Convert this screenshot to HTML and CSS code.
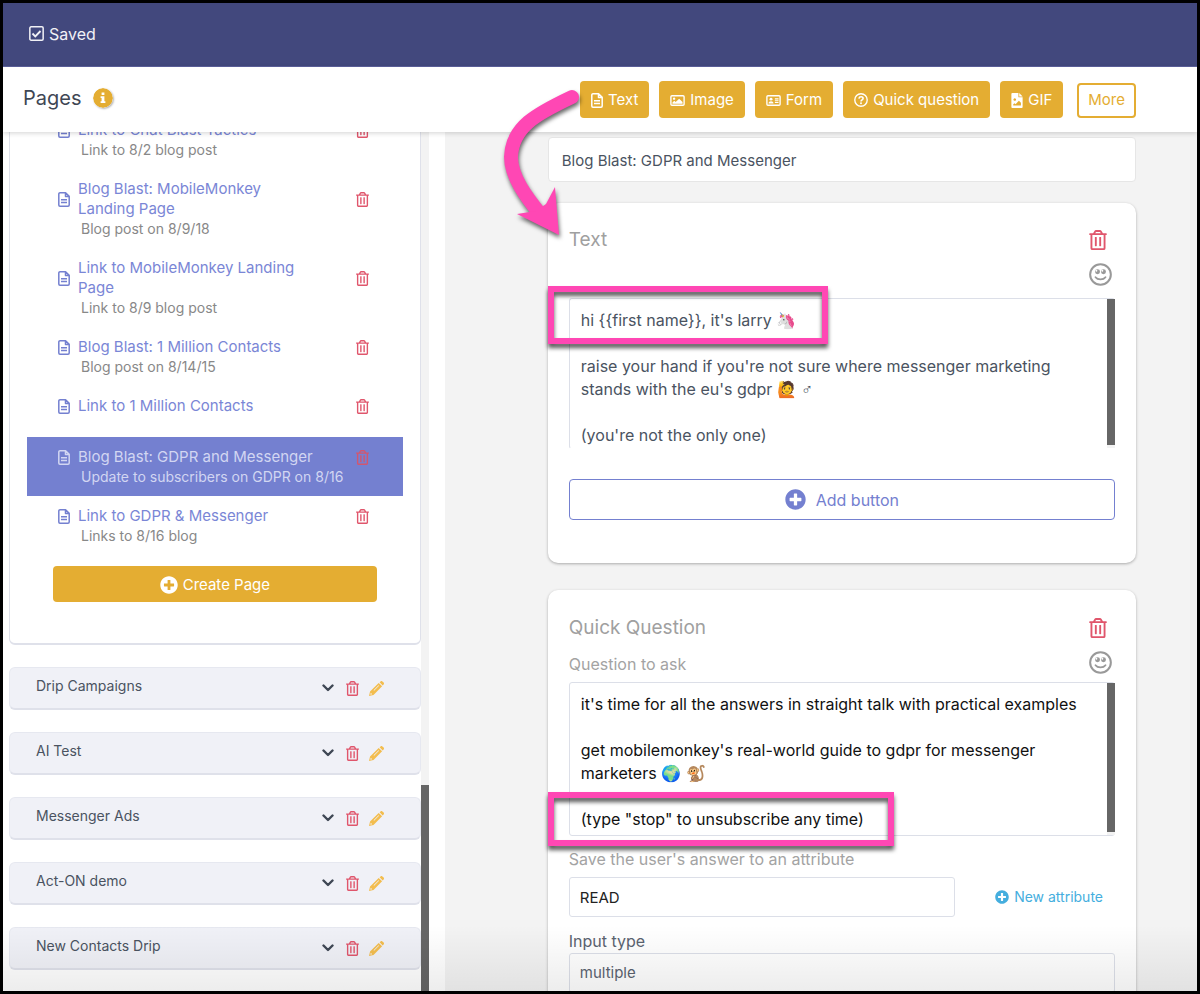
FILE: index.html
```html
<!DOCTYPE html>
<html lang="en">
<head>
<meta charset="utf-8">
<meta name="viewport" content="width=device-width, initial-scale=1">
<title>Pages</title>
<link rel="stylesheet" href="styles.css">
</head>
<body>
<svg class="sprite" aria-hidden="true">
  <symbol id="trash" viewBox="0 0 448 512"><path fill="currentColor" d="M268 416h24a12 12 0 0 0 12-12V188a12 12 0 0 0-12-12h-24a12 12 0 0 0-12 12v216a12 12 0 0 0 12 12zM432 80h-82.41l-34-56.7A48 48 0 0 0 274.41 0H173.59a48 48 0 0 0-41.16 23.3L98.41 80H16A16 16 0 0 0 0 96v16a16 16 0 0 0 16 16h16v336a48 48 0 0 0 48 48h288a48 48 0 0 0 48-48V128h16a16 16 0 0 0 16-16V96a16 16 0 0 0-16-16zM171.84 50.91A6 6 0 0 1 177 48h94a6 6 0 0 1 5.15 2.91L293.61 80H154.39zM368 464H80V128h288zm-212-48h24a12 12 0 0 0 12-12V188a12 12 0 0 0-12-12h-24a12 12 0 0 0-12 12v216a12 12 0 0 0 12 12z"/></symbol>
  <symbol id="plus" viewBox="0 0 512 512"><path fill="currentColor" d="M256 8C119 8 8 119 8 256s111 248 248 248 248-111 248-248S393 8 256 8zm144 276c0 6.600-5.400 12-12 12h-92v92c0 6.600-5.400 12-12 12h-56c-6.600 0-12-5.400-12-12v-92h-92c-6.600 0-12-5.400-12-12v-56c0-6.600 5.400-12 12-12h92v-92c0-6.600 5.400-12 12-12h56c6.600 0 12 5.400 12 12v92h92c6.600 0 12 5.400 12 12v56z"/></symbol>
  <symbol id="doc" viewBox="0 0 12 15"><path fill="none" stroke="currentColor" stroke-width="1.500" stroke-linejoin="round" d="M2 .8h5.600l3.600 3.600V13a1.200 1.200 0 0 1-1.200 1.200H2A1.200 1.200 0 0 1 .8 13V2A1.200 1.200 0 0 1 2 .8zM7.500 1v3.600h3.600M3 7.800h6M3 10.600h6"/></symbol>
  <symbol id="image" viewBox="0 0 16 12"><rect x=".8" y=".8" width="14.400" height="10.400" rx="1.200" fill="none" stroke="currentColor" stroke-width="1.500"/><circle cx="4.300" cy="4" r="1.300" fill="currentColor"/><path fill="currentColor" d="M2.500 9.500V8.300L4.500 6.300 6 7.700 9.800 4l3.700 3.700v1.800z"/></symbol>
  <symbol id="form" viewBox="0 0 16 12"><rect x=".8" y=".8" width="14.400" height="10.400" rx="1.200" fill="none" stroke="currentColor" stroke-width="1.500"/><circle cx="5.300" cy="4.500" r="1.600" fill="currentColor"/><path fill="currentColor" d="M2.600 9.200c0-3 5.400-3 5.400 0z"/><path stroke="currentColor" stroke-width="1.200" d="M9.500 4.200h4M9.500 6.200h4M9.500 8.200h4"/></symbol>
  <symbol id="question" viewBox="0 0 16 16"><circle cx="8" cy="8" r="7.100" fill="none" stroke="currentColor" stroke-width="1.600"/><path fill="none" stroke="currentColor" stroke-width="1.800" d="M5.600 6.300C6 3.600 10.400 3.700 10.400 6.200 10.400 7.800 8 7.800 8 9.600"/><circle cx="8" cy="11.700" r="1.100" fill="currentColor"/></symbol>
  <symbol id="filegif" viewBox="0 0 12 16"><path fill="currentColor" fill-rule="evenodd" d="M1 0h6.500v4.500H12V15a1 1 0 0 1-1 1H1a1 1 0 0 1-1-1V1a1 1 0 0 1 1-1zM3.600 5.600a1.400 1.400 0 1 0 .01 0zM2 13.300h8.200V10.500L8 8.300l-3.600 3.600-1-1L2 12z"/><path fill="currentColor" d="M8.400 0 12 3.600H8.400z"/></symbol>
  <symbol id="check" viewBox="0 0 16 16"><rect x=".9" y=".9" width="14.200" height="14.200" rx="1.300" fill="none" stroke="currentColor" stroke-width="1.600"/><path fill="none" stroke="currentColor" stroke-width="2" d="m3.700 8 3 3 5.600-5.700"/></symbol>
  <symbol id="info" viewBox="0 0 20 20"><circle cx="10" cy="10" r="10" fill="#e4ad32"/><path fill="#fff" d="M8.600 4.500h2.800v2.600H8.600zM7.600 8.300h3.800v5h1v1.600H7.600v-1.600h1V9.900h-1z"/></symbol>
  <symbol id="smile" viewBox="0 0 24 24"><circle cx="12" cy="12" r="10.800" fill="none" stroke="currentColor" stroke-width="2.100"/><circle cx="8.900" cy="9.200" r="2.600" fill="currentColor"/><circle cx="15.100" cy="9.200" r="2.600" fill="currentColor"/><circle cx="7.700" cy="8" r="1" fill="#fff"/><circle cx="13.900" cy="8" r="1" fill="#fff"/><path fill="none" stroke="currentColor" stroke-width="1.900" stroke-linecap="round" d="M6.800 14.800c2.200 3 8.200 3 10.400 0"/></symbol>
  <symbol id="chevron" viewBox="0 0 12 8"><path fill="none" stroke="currentColor" stroke-width="2.400" stroke-linecap="round" stroke-linejoin="round" d="m1.500 1.500 4.500 4.500 4.500-4.500"/></symbol>
  <symbol id="pencil" viewBox="0 0 16 16"><path fill="currentColor" fill-rule="evenodd" d="m11.300 1.400 1-1a1.500 1.500 0 0 1 2 0l1.300 1.300a1.500 1.500 0 0 1 0 2l-1 1zM10.300 2 14 5.700l-9.200 9.200L0 16l1.100-4.800zM10.200 4.500 4.900 9.800l.5.500 5.300-5.300zM1.900 12.600l-.5 2 2-.5z"/></symbol>
</svg>

<div class="app">
  <header class="topbar"><svg class="ico-16"><use href="#check"/></svg><span>Saved</span></header>

  <div class="toolbar">
    <h1 class="toolbar-title">Pages <svg class="info"><use href="#info"/></svg></h1>
    <div class="widgets">
      <button class="btn" type="button"><svg class="ico-doc"><use href="#doc"/></svg>Text</button>
      <button class="btn" type="button"><svg class="ico-wide"><use href="#image"/></svg>Image</button>
      <button class="btn" type="button"><svg class="ico-wide"><use href="#form"/></svg>Form</button>
      <button class="btn" type="button"><svg class="ico-14"><use href="#question"/></svg>Quick question</button>
      <button class="btn" type="button"><svg class="ico-doc"><use href="#filegif"/></svg>GIF</button>
      <button class="btn btn-more" type="button">More</button>
      <svg class="arrow" viewBox="0 0 90 165" aria-hidden="true">
        <path d="M76 16C40 33 16 46 15 76c0 20 16 41 30 58" fill="none" stroke="#ff47b4" stroke-width="14" stroke-linecap="round"/>
        <path d="M59 106 63 154 21 133 40 130 50 123z" fill="#ff47b4"/>
      </svg>
    </div>
  </div>

  <div class="main">
    <aside class="sidebar">
      <div class="sidebar-scroll">
        <section class="pages">
          <ul class="page-list">
            <li class="page"><svg class="page-icon"><use href="#doc"/></svg><a class="page-title" href="#">Link to Chat Blast Tactics</a><button class="icon-btn" type="button" aria-label="Delete"><svg class="trash-sm"><use href="#trash"/></svg></button><span class="page-desc">Link to 8/2 blog post</span></li>
            <li class="page"><svg class="page-icon"><use href="#doc"/></svg><a class="page-title" href="#">Blog Blast: MobileMonkey Landing Page</a><button class="icon-btn" type="button" aria-label="Delete"><svg class="trash-sm"><use href="#trash"/></svg></button><span class="page-desc">Blog post on 8/9/18</span></li>
            <li class="page"><svg class="page-icon"><use href="#doc"/></svg><a class="page-title" href="#">Link to MobileMonkey Landing Page</a><button class="icon-btn" type="button" aria-label="Delete"><svg class="trash-sm"><use href="#trash"/></svg></button><span class="page-desc">Link to 8/9 blog post</span></li>
            <li class="page"><svg class="page-icon"><use href="#doc"/></svg><a class="page-title" href="#">Blog Blast: 1 Million Contacts</a><button class="icon-btn" type="button" aria-label="Delete"><svg class="trash-sm"><use href="#trash"/></svg></button><span class="page-desc">Blog post on 8/14/15</span></li>
            <li class="page"><svg class="page-icon"><use href="#doc"/></svg><a class="page-title" href="#">Link to 1 Million Contacts</a><button class="icon-btn" type="button" aria-label="Delete"><svg class="trash-sm"><use href="#trash"/></svg></button></li>
            <li class="page page-active"><svg class="page-icon"><use href="#doc"/></svg><a class="page-title" href="#">Blog Blast: GDPR and Messenger</a><button class="icon-btn" type="button" aria-label="Delete"><svg class="trash-sm"><use href="#trash"/></svg></button><span class="page-desc">Update to subscribers on GDPR on 8/16</span></li>
            <li class="page"><svg class="page-icon"><use href="#doc"/></svg><a class="page-title" href="#">Link to GDPR &amp; Messenger</a><button class="icon-btn" type="button" aria-label="Delete"><svg class="trash-sm"><use href="#trash"/></svg></button><span class="page-desc">Links to 8/16 blog</span></li>
          </ul>
          <button class="btn btn-create" type="button"><svg class="ico-18"><use href="#plus"/></svg>Create Page</button>
        </section>
        <section class="folder"><span class="folder-name">Drip Campaigns</span><button class="icon-btn dark" type="button" aria-label="Expand"><svg class="chevron"><use href="#chevron"/></svg></button><button class="icon-btn" type="button" aria-label="Delete"><svg class="trash-sm"><use href="#trash"/></svg></button><button class="icon-btn gold" type="button" aria-label="Rename"><svg class="pencil"><use href="#pencil"/></svg></button></section>
        <section class="folder"><span class="folder-name">AI Test</span><button class="icon-btn dark" type="button" aria-label="Expand"><svg class="chevron"><use href="#chevron"/></svg></button><button class="icon-btn" type="button" aria-label="Delete"><svg class="trash-sm"><use href="#trash"/></svg></button><button class="icon-btn gold" type="button" aria-label="Rename"><svg class="pencil"><use href="#pencil"/></svg></button></section>
        <section class="folder"><span class="folder-name">Messenger Ads</span><button class="icon-btn dark" type="button" aria-label="Expand"><svg class="chevron"><use href="#chevron"/></svg></button><button class="icon-btn" type="button" aria-label="Delete"><svg class="trash-sm"><use href="#trash"/></svg></button><button class="icon-btn gold" type="button" aria-label="Rename"><svg class="pencil"><use href="#pencil"/></svg></button></section>
        <section class="folder"><span class="folder-name">Act-ON demo</span><button class="icon-btn dark" type="button" aria-label="Expand"><svg class="chevron"><use href="#chevron"/></svg></button><button class="icon-btn" type="button" aria-label="Delete"><svg class="trash-sm"><use href="#trash"/></svg></button><button class="icon-btn gold" type="button" aria-label="Rename"><svg class="pencil"><use href="#pencil"/></svg></button></section>
        <section class="folder"><span class="folder-name">New Contacts Drip</span><button class="icon-btn dark" type="button" aria-label="Expand"><svg class="chevron"><use href="#chevron"/></svg></button><button class="icon-btn" type="button" aria-label="Delete"><svg class="trash-sm"><use href="#trash"/></svg></button><button class="icon-btn gold" type="button" aria-label="Rename"><svg class="pencil"><use href="#pencil"/></svg></button></section>
      </div>
      <div class="side-track"><div class="side-thumb"></div></div>
    </aside>

    <main class="canvas">
      <input class="page-name" type="text" aria-label="Page name" value="Blog Blast: GDPR and Messenger">

      <section class="card">
        <div class="card-head">
          <h2 class="card-title">Text</h2>
          <div class="card-tools">
            <button class="icon-btn" type="button" aria-label="Delete"><svg class="trash-lg"><use href="#trash"/></svg></button>
            <button class="icon-btn gray" type="button" aria-label="Emoji"><svg class="smile"><use href="#smile"/></svg></button>
          </div>
        </div>
        <div class="message">
          <textarea class="message-text message-open" aria-label="Text message">hi {{first name}}, it's larry 🦄

raise your hand if you're not sure where messenger marketing stands with the eu's gdpr 🙋 ♂

(you're not the only one)</textarea>
          <div class="message-track"><div class="message-thumb"></div></div>
          <div class="mark mark-name"></div>
        </div>
        <button class="btn-add" type="button"><svg class="ico-20"><use href="#plus"/></svg>Add button</button>
      </section>

      <section class="card card-question">
        <div class="card-head">
          <div>
            <h2 class="card-title">Quick Question</h2>
            <label class="label" for="ask">Question to ask</label>
          </div>
          <div class="card-tools">
            <button class="icon-btn" type="button" aria-label="Delete"><svg class="trash-lg"><use href="#trash"/></svg></button>
            <button class="icon-btn gray" type="button" aria-label="Emoji"><svg class="smile"><use href="#smile"/></svg></button>
          </div>
        </div>
        <div class="message">
          <textarea class="message-text message-black" id="ask">it's time for all the answers in straight talk with practical examples

get mobilemonkey's real-world guide to gdpr for messenger marketers 🌍 🐒

(type "stop" to unsubscribe any time)</textarea>
          <div class="message-track"><div class="message-thumb"></div></div>
          <div class="mark mark-stop"></div>
        </div>
        <label class="label label-save" for="attribute">Save the user's answer to an attribute</label>
        <div class="attribute-row">
          <input class="field" id="attribute" type="text" value="READ">
          <button class="btn-link" type="button"><svg class="ico-14"><use href="#plus"/></svg>New attribute</button>
        </div>
        <label class="label label-dark" for="type">Input type</label>
        <select class="field field-select" id="type"><option>multiple</option></select>
      </section>
    </main>
  </div>
  <div class="fade"></div>
</div>
</body>
</html>
```
FILE: styles.css
```css
* { box-sizing: border-box; }
body { margin: 0; font-family: Inter, "Liberation Sans", sans-serif; font-size: 16px; line-height: 20px; color: #4a5361; }
button, input, textarea, select { font: inherit; color: inherit; margin: 0; }
button { cursor: pointer; }
svg { display: block; flex: none; }
h1, h2, ul { margin: 0; padding: 0; font-weight: 400; }
.sprite { position: absolute; width: 0; height: 0; }

.app { position: relative; display: flex; flex-direction: column; height: 100vh; overflow: hidden; border: 3px solid #000; background: #fff; }

.topbar { flex: none; display: flex; align-items: center; gap: 5px; height: 64px; padding: 0 26px 2px; background: #42487d; border-bottom: 1px solid #5e63a0; color: #f1f1f6; }
.ico-16 { width: 15px; height: 15px; }
.ico-14 { width: 14px; height: 14px; }
.ico-18 { width: 18px; height: 18px; }
.ico-20 { width: 21px; height: 21px; }
.ico-doc { width: 12px; height: 15px; }
.ico-wide { width: 15px; height: 11px; }

.toolbar { position: relative; z-index: 2; flex: none; display: flex; align-items: center; justify-content: space-between; height: 65px; padding: 0 61px 1px 20px; background: #fff; box-shadow: 0 1px 5px rgba(0, 0, 0, .18); }
.toolbar-title { display: flex; align-items: center; gap: 11px; padding-bottom: 2px; font-size: 20px; line-height: 26px; color: #3f4754; }
.info { width: 20px; height: 20px; border-radius: 50%; box-shadow: 1px 1px 2px rgba(0, 0, 0, .3); }
.widgets { position: relative; display: flex; align-items: flex-end; gap: 10px; }
.btn { display: flex; align-items: center; justify-content: center; gap: 5px; height: 37px; padding: 2px 11px 0; border: 0; border-radius: 4px; background: #e4ad32; color: #fff; font-size: 15px; }
.btn-more { height: 35px; margin-left: 4px; padding: 0 9px; border: 2px solid #e4ad32; background: #fff; color: #e4ad32; }
.arrow { position: absolute; left: -84px; top: 0; width: 90px; height: 165px; filter: drop-shadow(1px 3px 2px rgba(0, 0, 0, .6)); }

.main { flex: 1; display: flex; min-height: 0; }
.sidebar { flex: none; display: flex; width: 37%; overflow: hidden; background: #fff; }
.sidebar-scroll { flex: 1; min-width: 0; padding-left: 6px; }
.side-track { display: flex; flex-direction: column; justify-content: flex-end; width: 8px; margin-right: 16px; background: #f3f3f3; }
.side-thumb { height: 24%; background: #666; }

.pages { margin-top: -31px; padding: 8px 17px 41px; border: 1px solid #dfe1ea; border-bottom-width: 2px; border-radius: 6px; }
.page-list { list-style: none; }
.page { display: grid; grid-template-columns: 20px 1fr 13px; align-items: center; align-content: start; min-height: 51px; padding: 10px 34px 9px 31px; }
.page-icon { width: 12px; height: 15px; color: #7480d0; }
.page-title { padding-right: 50px; color: #7a86d6; font-size: 15px; text-decoration: none; }
.page-desc { grid-column: 2 / -1; padding-left: 3px; color: #888; font-size: 14px; white-space: nowrap; }
.page-active { background: #7480d0; color: #d2d6f2; }
.page-active .page-icon, .page-active .page-title, .page-active .page-desc { color: #d2d6f2; }
.page-active .page-title { padding-right: 20px; }
.page-active .icon-btn { color: #d2566f; }
.icon-btn { display: block; padding: 0; border: 0; background: none; color: #e0566c; }
.dark { color: #3f4754; }
.gold { color: #f3bd4e; }
.gray { color: #999; }
.trash-sm { width: 13px; height: 15px; }
.trash-lg { width: 18px; height: 20px; }
.smile { width: 23px; height: 23px; }
.chevron { width: 12px; height: 8px; }
.pencil { width: 15px; height: 15px; }
.btn-create { width: calc(100% - 52px); height: 36px; margin: 11px 26px 0; padding: 2px 0 0; }
.folder { display: flex; align-items: center; height: 43px; margin-top: 22px; padding: 0 36px 0 26px; border: 1px solid #e6e8f0; border-bottom: 2px solid #dfe1ea; border-radius: 6px; background: #f0f1f7; }
.folder-name { flex: 1; padding-bottom: 4px; font-size: 14px; }
.folder .icon-btn + .icon-btn { margin-left: 12px; }
.folder .icon-btn + .gold { margin-left: 10px; }

.canvas { flex: 1; min-width: 0; padding: 5px 61px 0 103px; background: #f3f3f3; }
.page-name { display: block; width: 100%; height: 45px; padding: 2px 13px 0; border: 1px solid #e6e6e6; border-radius: 4px; background: #fff; font-size: 15px; }
.card { margin-top: 21px; padding: 27px 21px 43px; border-radius: 10px; background: #fff; box-shadow: 0 1px 3px rgba(0, 0, 0, .3); }
.card + .card { margin-top: 27px; padding-top: 28px; }
.card-head { display: flex; justify-content: space-between; margin-bottom: 12px; }
.card-question .card-head { margin-bottom: 8px; }
.card-title { font-size: 19px; line-height: 20px; color: #a0a0a0; }
.card-tools { display: flex; flex-direction: column; align-items: flex-start; gap: 13px; padding-right: 3px; }
.label { display: block; color: #a3a3a3; }
.card-title + .label { margin-top: 16px; }

.message { position: relative; }
.message-text { display: block; width: 100%; height: 154px; padding: 10px 22px 0 11px; border: 1px solid #dcdfe8; border-radius: 3px; background: none; line-height: 23px; resize: none; overflow: hidden; }
.message-open { height: 151px; border-bottom-color: transparent; border-right-color: transparent; }
.message-black { color: #111; }
.message-track { position: absolute; right: 0; top: 1px; bottom: 1px; width: 8px; background: #f3f3f3; }
.message-thumb { height: 98%; background: #666; }
.mark { position: absolute; left: -21px; border: 6px solid #ff47b4; filter: drop-shadow(0 4px 2px rgba(0, 0, 0, .65)); }
.mark-name { top: -12px; width: 280px; height: 58px; }
.mark-stop { top: 110px; width: 346px; height: 54px; }

.btn-add { display: flex; align-items: center; justify-content: center; gap: 10px; width: 100%; height: 41px; margin-top: 30px; padding: 0; border: 1px solid #7480d0; border-radius: 4px; background: #fff; color: #7480d0; }
.label-save { margin-top: 13px; }
.attribute-row { display: flex; align-items: center; margin: 8px 0 14px; }
.field { width: 100%; height: 40px; padding: 1px 11px 0 10px; border: 1px solid #dcdfe8; border-radius: 3px; background: #fff; color: #222; font-size: 15px; }
.attribute-row .field { flex: 1; min-width: 0; }
.btn-link { display: flex; align-items: center; gap: 5px; margin: 0 12px 0 40px; padding: 0; border: 0; background: none; color: #45aede; font-size: 14px; }
.label-dark { margin-bottom: 2px; color: #5b6370; }
.field-select { appearance: none; padding-bottom: 2px; color: #5b6370; }

.fade { position: absolute; z-index: 3; left: 0; right: 0; bottom: 0; height: 66px; pointer-events: none; background: linear-gradient(rgba(0, 0, 0, 0), rgba(0, 0, 0, .07)); }
```
